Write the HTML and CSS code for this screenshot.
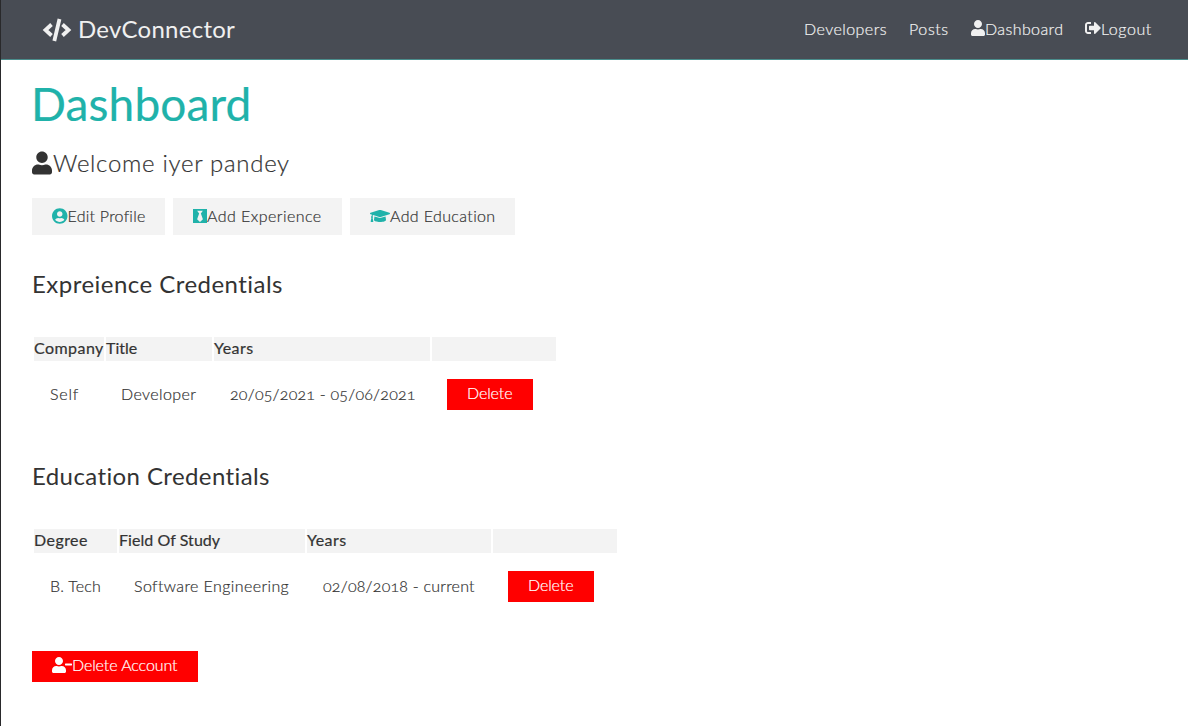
FILE: index.html
```
<!DOCTYPE html>
<html lang="en">
<head>
<meta charset="utf-8">
<title>DevConnector</title>
<link rel="stylesheet" href="styles.css">
</head>
<body>
<svg class="defs" aria-hidden="true">
  <symbol id="user" viewBox="0 0 448 512"><path d="M224 256c70.700 0 128-57.300 128-128S294.700 0 224 0 96 57.300 96 128s57.300 128 128 128zm89.600 32h-16.700c-22.200 10.200-46.900 16-72.900 16s-50.600-5.800-72.900-16h-16.700C60.200 288 0 348.200 0 422.400V464c0 26.500 21.500 48 48 48h352c26.500 0 48-21.500 48-48v-41.600c0-74.200-60.200-134.400-134.400-134.400z"/></symbol>
</svg>
<nav class="navbar">
  <a class="brand"><svg class="code" viewBox="0 0 30 24"><path d="M9.500 6.500 3.500 12l6 5.500M20.500 6.500 26.500 12l-6 5.500M17.500 1 12.300 23"/></svg><span class="brand-name">DevConnector</span></a>
  <div class="links">
    <a class="developers">Developers</a>
    <a class="posts">Posts</a>
    <a class="dash"><svg class="i14"><use href="#user"/></svg><span>Dashboard</span></a>
    <a class="logout"><svg class="i16" viewBox="0 0 512 512"><path d="M497 273L329 441c-15 15-41 4.500-41-17v-96H152c-13.300 0-24-10.700-24-24v-96c0-13.300 10.700-24 24-24h136V88c0-21.400 25.900-32 41-17l168 168c9.300 9.400 9.300 24.600 0 34zM192 436v-40c0-6.600-5.400-12-12-12H96c-17.700 0-32-14.300-32-32V160c0-17.700 14.300-32 32-32h84c6.600 0 12-5.400 12-12V76c0-6.600-5.400-12-12-12H96c-53 0-96 43-96 96v192c0 53 43 96 96 96h84c6.600 0 12-5.400 12-12z"/></svg><span>Logout</span></a>
  </div>
</nav>
<main class="container">
  <h1>Dashboard</h1>
  <p class="lead"><svg class="i20"><use href="#user"/></svg><span>Welcome iyer pandey</span></p>
  <div class="actions">
    <a class="btn edit"><svg class="i155" viewBox="0 0 496 512"><path d="M248 8C111 8 0 119 0 256s111 248 248 248 248-111 248-248S385 8 248 8zm0 96c48.600 0 88 39.400 88 88s-39.400 88-88 88-88-39.400-88-88 39.400-88 88-88zm0 344c-58.700 0-111.300-26.600-146.500-68.200 18.800-35.400 55.600-59.800 98.500-59.800 2.400 0 4.800.4 7.100 1.100 13 4.200 26.600 6.900 40.900 6.900 14.300 0 28-2.700 40.900-6.900 2.300-.7 4.700-1.100 7.100-1.100 42.900 0 79.700 24.400 98.500 59.800C359.300 421.400 306.700 448 248 448z"/></svg><span>Edit Profile</span></a>
    <a class="btn add-exp"><svg class="i14" viewBox="0 0 448 512"><path d="M0 32v448h448V32H0zm316.500 325.200L224 445.900l-92.500-88.700 64.500-184-64.500-86.600h184.900L252 173.200l64.500 184z"/></svg><span>Add Experience</span></a>
    <a class="btn add-edu"><svg class="i20w" viewBox="0 0 640 512"><path d="M622.340 153.200L343.400 67.500c-15.200-4.670-31.600-4.670-46.790 0L17.660 153.200c-23.540 7.230-23.540 38.360 0 45.590l48.630 14.940c-10.670 13.190-17.230 29.280-17.880 46.900C38.780 266.150 32 276.110 32 288c0 10.780 5.680 19.850 13.860 25.650L20.330 428.530C18.110 438.520 25.710 448 35.940 448h56.110c10.240 0 17.840-9.480 15.620-19.470L82.140 313.650C90.320 307.850 96 298.780 96 288c0-11.570-6.470-21.250-15.660-26.870.76-15.020 8.440-28.300 20.690-36.720L296.600 284.500c9.060 2.780 26.440 6.250 46.790 0l278.950-85.700c23.550-7.240 23.550-38.360 0-45.600zM352.790 315.090c-28.530 8.760-52.840 3.920-65.590 0l-145.020-44.550L128 384c0 35.350 85.960 64 192 64s192-28.650 192-64l-14.180-113.470-145.030 44.560z"/></svg><span>Add Education</span></a>
  </div>

  <h2 class="h-exp">Expreience Credentials</h2>
  <table class="exp">
    <colgroup><col class="w70"><col class="w106"><col class="w216"><col class="w124"></colgroup>
    <thead><tr><th>Company</th><th class="t-title">Title</th><th>Years</th><th></th></tr></thead>
    <tbody><tr><td class="t-self">Self</td><td class="t-dev">Developer</td><td class="date">20/05/2021 - 05/06/2021</td><td><button class="danger del">Delete</button></td></tr></tbody>
  </table>

  <h2 class="h-edu">Education Credentials</h2>
  <table class="edu">
    <colgroup><col class="w83"><col class="w186"><col class="w184"><col class="w124"></colgroup>
    <thead><tr><th>Degree</th><th class="t-field">Field Of Study</th><th>Years</th><th></th></tr></thead>
    <tbody><tr><td class="t-deg">B. Tech</td><td class="t-dev">Software Engineering</td><td class="date">02/08/2018 - current</td><td><button class="danger del">Delete</button></td></tr></tbody>
  </table>

  <button class="danger account"><svg class="i20w" viewBox="0 0 640 512"><path d="M624 208H432c-8.800 0-16 7.200-16 16v32c0 8.800 7.200 16 16 16h192c8.800 0 16-7.200 16-16v-32c0-8.800-7.200-16-16-16zm-400 48c70.700 0 128-57.300 128-128S294.700 0 224 0 96 57.300 96 128s57.300 128 128 128zm89.600 32h-16.700c-22.200 10.200-46.900 16-72.900 16s-50.600-5.800-72.900-16h-16.700C60.200 288 0 348.200 0 422.400V464c0 26.500 21.500 48 48 48h352c26.500 0 48-21.500 48-48v-41.600c0-74.200-60.200-134.400-134.400-134.400z"/></svg><span>Delete Account</span></button>
</main>
</body>
</html>
```
FILE: styles.css
```
* { box-sizing: border-box; margin: 0; padding: 0; }
body {
  height: 726px;
  overflow: hidden;
  border-left: 1px solid #29292b;
  background: #fff;
  color: #333;
  font: 300 16px/24px Lato, "Open Sans", sans-serif;
  font-variant-numeric: oldstyle-nums;
  font-variant-ligatures: none;
  letter-spacing: .45px;
  -webkit-text-stroke: .2px currentColor;
}
svg { fill: currentColor; flex: none; display: block; }
.defs { position: absolute; width: 0; height: 0; }
.i14 { width: 14px; height: 16px; }
.i155 { width: 15.500px; height: 16px; }
.i16 { width: 16px; height: 16px; }
.i20 { width: 20px; height: 24px; }
.i20w { width: 20px; height: 16px; }

.navbar {
  height: 60px;
  padding: 0 36px 1px 41px;
  display: flex;
  justify-content: space-between;
  align-items: center;
  background: #484c54;
  border-bottom: 1px solid #4a8d8c;
  color: #f0f0f0;
}
.brand, .links, .links a { display: flex; align-items: center; }
.brand { font-size: 24px; font-weight: 400; letter-spacing: .25px; -webkit-text-stroke: 0; gap: 6px; }
.code { width: 30px; height: 24px; fill: none; stroke: currentColor; stroke-width: 3.800; margin-top: 1px; }
.developers { width: 105px; }
.posts { width: 62px; letter-spacing: .6px; }
.dash { width: 114px; letter-spacing: .4px; }
.logout { width: 67px; letter-spacing: .55px; }
.links svg { margin-top: -2px; }

.container { padding: 16px 31px; }
h1 {
  color: #20b2aa;
  font-size: 46px;
  font-weight: 400;
  line-height: 56px;
  letter-spacing: .15px;
  margin-left: -1px;
}
.lead { display: flex; align-items: center; height: 32px; margin-top: 15px; font-size: 24px; letter-spacing: .7px; gap: 1px; }
.actions { display: flex; gap: 8px; margin-top: 19px; }
.btn { display: flex; align-items: center; height: 37px; padding: 0 0 1px 20px; background: #f3f3f3; }
.btn svg { color: #20b2aa; }
.edit { width: 133px; letter-spacing: .25px; }
.add-exp { width: 169px; }
.add-edu { width: 165px; letter-spacing: .37px; }

h2 { font-size: 24px; font-weight: 400; line-height: 32px; -webkit-text-stroke: 0; }
.h-exp { margin-top: 33px; letter-spacing: .47px; }
.h-edu { margin-top: 32px; letter-spacing: .4px; }

table { table-layout: fixed; border-spacing: 2px; margin-top: 35px; }
.exp { width: 526px; }
.edu { width: 587px; }
.w70 { width: 70px; }
.w83 { width: 83px; }
.w106 { width: 106px; }
.w124 { width: 124px; }
.w184 { width: 184px; }
.w186 { width: 186px; }
.w216 { width: 216px; }
th { height: 24px; padding-bottom: 2px; line-height: 22px; background: #f3f3f3; text-align: left; font-weight: 400; white-space: nowrap; }
td { height: 63px; padding: 0 0 2px 16px; white-space: nowrap; vertical-align: middle; }
td:last-child { padding-bottom: 0; }
.t-title { letter-spacing: 0; }
.t-field { letter-spacing: .05px; }
.t-self { letter-spacing: .8px; }
.t-deg { letter-spacing: .2px; }
.t-dev { padding-left: 15px; letter-spacing: .4px; }
.date { letter-spacing: .22px; }

.danger {
  display: flex;
  align-items: center;
  border: 0;
  background: #f00;
  color: #fff;
  font: inherit;
  letter-spacing: -.1px;
  -webkit-text-stroke: .2px currentColor;
}
.del { width: 86px; height: 31px; margin-left: -1px; padding: 0 0 4px 20px; }
.account { width: 166px; height: 31px; margin-top: 31px; padding: 0 0 4px 20px; }
```
